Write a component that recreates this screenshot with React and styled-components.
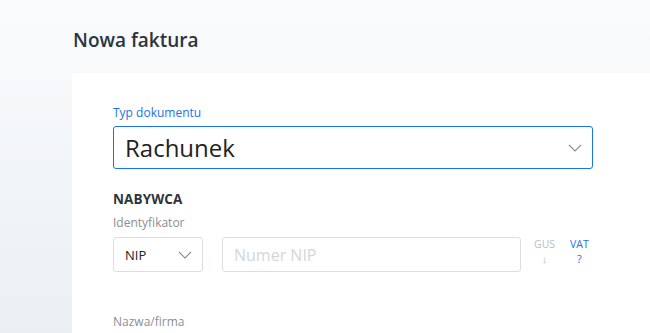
import styled, { createGlobalStyle } from "styled-components";

const GlobalStyle = createGlobalStyle`
  html, body {
    margin: 0;
    padding: 0;
    height: 100%;
    overflow: hidden;
  }
  body {
    font-family: "Open Sans", "Noto Sans", sans-serif;
    background: linear-gradient(180deg, #fafbfc 0%, #eaeff4 100%);
  }
`;

const Page = styled.div`
  height: 333px;
  padding-left: 72px;
  box-sizing: border-box;
  overflow: hidden;
`;

const Title = styled.h1`
  margin: 0;
  padding: 27px 0 0 1px;
  height: 73px;
  box-sizing: border-box;
  font-size: 19px;
  line-height: 26px;
  font-weight: 600;
  color: #2b3440;
`;

const Card = styled.div`
  background: #fff;
  height: 260px;
  border-radius: 3px 0 0 0;
  padding: 31px 0 0 41px;
  box-sizing: border-box;
`;

const Field = styled.div`
  width: 480px;
`;

const Label = styled.div`
  font-size: 12px;
  line-height: 18px;
  color: ${(p) => (p.$active ? "#1a73e8" : "#8a8f96")};
  margin-top: ${(p) => p.$top || 0}px;
  margin-bottom: ${(p) => p.$gap || 4}px;
`;

const Select = styled.div`
  display: flex;
  align-items: center;
  justify-content: space-between;
  box-sizing: border-box;
  height: ${(p) => p.$height}px;
  width: ${(p) => (p.$width ? `${p.$width}px` : "100%")};
  border: 1px solid ${(p) => (p.$active ? "#1a73e8" : "#dadde1")};
  border-radius: 3px;
  padding: 0 10px 0 11px;
  font-size: ${(p) => p.$fontSize}px;
  color: #222;
  background: #fff;
`;

const Chevron = () => (
  <svg width="14" height="8" viewBox="0 0 14 8" fill="none">
    <path d="M1 1l6 6 6-6" stroke="#8c8c8c" strokeWidth="1.1" />
  </svg>
);

const SectionTitle = styled.div`
  margin-top: 20px;
  font-size: 13.5px;
  font-weight: 700;
  color: #2f343a;
  line-height: 20px;
  letter-spacing: 0.1px;
`;

const Row = styled.div`
  display: flex;
  align-items: center;
`;

const Input = styled.input`
  box-sizing: border-box;
  margin-left: 19px;
  width: 299px;
  height: 35px;
  border: 1px solid #dadde1;
  border-radius: 3px;
  padding: 0 11px;
  font-family: inherit;
  font-size: 16px;
  color: #222;
  outline: none;

  &::placeholder {
    color: #d3d6da;
  }
`;

const Tool = styled.div`
  display: flex;
  flex-direction: column;
  align-items: center;
  gap: 1px;
  margin-left: ${(p) => p.$gap}px;
  margin-top: -6px;
  font-size: 10.5px;
  line-height: 13px;
  color: ${(p) => (p.$blue ? "#1a73e8" : "#b8bcc1")};
`;

const Arrow = styled.span`
  font-size: 11px;
  line-height: 13px;
`;

export default function App() {
  return (
    <>
      <GlobalStyle />
      <Page>
        <Title>Nowa faktura</Title>
        <Card>
          <Field>
            <Label $active $gap={4}>Typ dokumentu</Label>
            <Select $active $height={43} $fontSize={24}>
              Rachunek
              <Chevron />
            </Select>
          </Field>
          <SectionTitle>NABYWCA</SectionTitle>
          <Label $top={5} $gap={5}>Identyfikator</Label>
          <Row>
            <Select $height={35} $width={90} $fontSize={13}>
              NIP
              <Chevron />
            </Select>
            <Input placeholder="Numer NIP" />
            <Tool $gap={13}>
              <span>GUS</span>
              <Arrow>↓</Arrow>
            </Tool>
            <Tool $gap={15} $blue>
              <span>VAT</span>
              <Arrow>?</Arrow>
            </Tool>
          </Row>
          <Label $top={41}>Nazwa/firma</Label>
        </Card>
      </Page>
    </>
  );
}
